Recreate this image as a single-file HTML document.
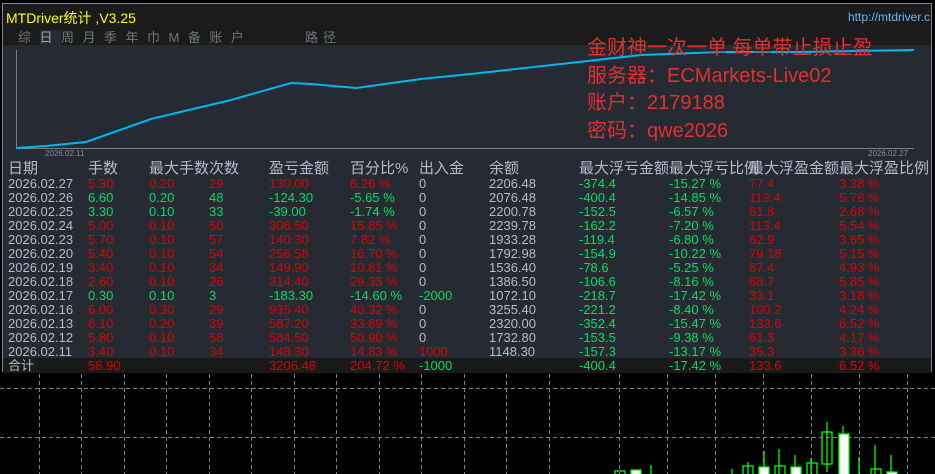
<!DOCTYPE html>
<html><head><meta charset="utf-8"><style>
*{margin:0;padding:0;box-sizing:border-box}
body{width:935px;height:474px;background:#000;overflow:hidden;position:relative;font-family:"Liberation Sans","Noto Sans CJK SC",sans-serif}
.panel{position:absolute;left:2px;top:3px;width:930px;height:369px;background:#252a33;border:1px solid #7a8394}
.top{position:absolute;left:0;top:0;width:100%;height:41px;background:#1b1b1b}
.t{position:absolute;white-space:nowrap}
.row{position:absolute;left:0;width:100%;height:14px;font-size:13px;line-height:14px}
.row span{position:absolute;top:0;white-space:nowrap}
.g{color:#00e060}.r{color:#e00000}.w{color:#b4bccc}
</style></head><body>
<svg width="935" height="474" style="position:absolute;left:0;top:0">
<g stroke="#7a8394" stroke-dasharray="4,3" stroke-width="1">
<line x1="0" y1="388.5" x2="935" y2="388.5"/><line x1="0" y1="437.5" x2="935" y2="437.5"/>
<line x1="39.5" y1="374" x2="39.5" y2="474"/><line x1="81.5" y1="374" x2="81.5" y2="474"/><line x1="124.5" y1="374" x2="124.5" y2="474"/><line x1="166.5" y1="374" x2="166.5" y2="474"/><line x1="209.5" y1="374" x2="209.5" y2="474"/><line x1="251.5" y1="374" x2="251.5" y2="474"/><line x1="294.5" y1="374" x2="294.5" y2="474"/><line x1="336.5" y1="374" x2="336.5" y2="474"/><line x1="379.5" y1="374" x2="379.5" y2="474"/><line x1="421.5" y1="374" x2="421.5" y2="474"/><line x1="464.5" y1="374" x2="464.5" y2="474"/><line x1="506.5" y1="374" x2="506.5" y2="474"/><line x1="549.5" y1="374" x2="549.5" y2="474"/><line x1="619.5" y1="374" x2="619.5" y2="474"/><line x1="667.5" y1="374" x2="667.5" y2="474"/><line x1="715.5" y1="374" x2="715.5" y2="474"/><line x1="763.5" y1="374" x2="763.5" y2="474"/><line x1="811.5" y1="374" x2="811.5" y2="474"/><line x1="859.5" y1="374" x2="859.5" y2="474"/><line x1="907.5" y1="374" x2="907.5" y2="474"/>
</g>
<g stroke="#00ff00" stroke-width="1.3" fill="none">
<rect x="615" y="471" width="10" height="6"/><rect x="631" y="470" width="10" height="6" fill="#fff"/><line x1="651" y1="465" x2="651" y2="474"/>
<line x1="732" y1="469" x2="732" y2="474"/><line x1="748" y1="462" x2="748" y2="474"/><rect x="743" y="466" width="10" height="10"/>
<line x1="764" y1="451" x2="764" y2="474"/><rect x="759" y="467" width="10" height="10" fill="#fff"/>
<line x1="779" y1="449" x2="779" y2="474"/><rect x="775" y="466" width="10" height="10"/>
<line x1="795" y1="455" x2="795" y2="474"/><rect x="791" y="467" width="10" height="10" fill="#fff"/>
<line x1="811" y1="458" x2="811" y2="474"/><rect x="807" y="463" width="10" height="12"/>
<line x1="827" y1="422" x2="827" y2="472"/><rect x="822" y="432" width="10" height="32"/>
<line x1="843" y1="426" x2="843" y2="474"/><rect x="839" y="434" width="10" height="42" fill="#fff"/>
<line x1="859" y1="457" x2="859" y2="474"/>
<line x1="875" y1="445" x2="875" y2="474"/><rect x="871" y="469" width="10" height="8"/>
<line x1="891" y1="455" x2="891" y2="474"/><rect x="887" y="472" width="10" height="6" fill="#fff"/>
</g>
</svg>
<div class="panel">
<div class="top"></div>
<div class="t" style="left:3px;top:4px;font-size:14px;color:#ffff00">MTDriver统计 ,V3.25</div>
<div class="t" style="left:845px;top:6px;font-size:12px;color:#5fb8ff">http://mtdriver.c</div>
<div class="t" style="left:15px;top:23px;font-size:13px;color:#707478;letter-spacing:8.5px">综<span style="background:#262c34;color:#a0a4a8">日</span>周月季年巾M备账户</div>
<div class="t" style="left:302px;top:23px;font-size:13px;color:#707478;letter-spacing:5px">路径</div>
<svg width="930" height="125" style="position:absolute;left:-2px;top:38px">
<line x1="15.5" y1="8" x2="15.5" y2="106" stroke="#7a7e84"/>
<line x1="15" y1="106.5" x2="913" y2="106.5" stroke="#7a7e84"/>
<polyline fill="none" stroke="#00b8f0" stroke-width="2" points="15,106 45,104 85,100 150,77 230,58 290,41 310,42 355,46 420,37 470,32 560,22 640,13 720,10 800,10 913,8"/>
</svg>
<div class="t" style="left:42px;top:145px;font-size:8px;color:#8a8e94">2026.02.11</div>
<div class="t" style="left:865px;top:145px;font-size:8px;color:#8a8e94">2026.02.27</div>
<div class="t" style="left:584px;top:31px;font-size:20px;color:#e03030;line-height:27.5px">金财神一次一单 每单带止损止盈<br>服务器：ECMarkets-Live02<br>账户：2179188<br>密码：qwe2026</div>
<div style="position:absolute;left:0;top:354px;width:100%;height:15px;background:#1a1a1a"></div>
<div class="row w" style="top:157px;font-size:15px;line-height:16px"><span style="left:5px">日期</span><span style="left:85px">手数</span><span style="left:146px">最大手数</span><span style="left:206px">次数</span><span style="left:266px">盈亏金额</span><span style="left:347px">百分比%</span><span style="left:416px">出入金</span><span style="left:486px">余额</span><span style="left:576px">最大浮亏金额</span><span style="left:666px">最大浮亏比例</span><span style="left:746px">最大浮盈金额</span><span style="left:836px">最大浮盈比例</span></div>
<div id="rows"></div>
</div>
<script>
var d=[["2026.02.27","5.30","0.20","29","130.00","6.26 %","0","2206.48","-374.4","-15.27 %","77.4","3.38 %"],
["2026.02.26","6.60","0.20","48","-124.30","-5.65 %","0","2076.48","-400.4","-14.85 %","113.4","5.78 %"],
["2026.02.25","3.30","0.10","33","-39.00","-1.74 %","0","2200.78","-152.5","-6.57 %","61.8","2.68 %"],
["2026.02.24","5.00","0.10","50","306.50","15.85 %","0","2239.78","-162.2","-7.20 %","113.4","5.54 %"],
["2026.02.23","5.70","0.10","57","140.30","7.82 %","0","1933.28","-119.4","-6.80 %","62.9","3.65 %"],
["2026.02.20","5.40","0.10","54","256.58","16.70 %","0","1792.98","-154.9","-10.22 %","79.18","5.15 %"],
["2026.02.19","3.40","0.10","34","149.90","10.81 %","0","1536.40","-78.6","-5.25 %","67.4","4.93 %"],
["2026.02.18","2.60","0.10","26","314.40","29.33 %","0","1386.50","-106.6","-8.16 %","68.7","5.85 %"],
["2026.02.17","0.30","0.10","3","-183.30","-14.60 %","-2000","1072.10","-218.7","-17.42 %","33.1","3.18 %"],
["2026.02.16","6.00","0.30","29","935.40","40.32 %","0","3255.40","-221.2","-8.40 %","100.2","4.24 %"],
["2026.02.13","6.10","0.20","39","587.20","33.89 %","0","2320.00","-352.4","-15.47 %","133.6","6.52 %"],
["2026.02.12","5.80","0.10","58","584.50","50.90 %","0","1732.80","-153.5","-9.38 %","61.3","4.17 %"],
["2026.02.11","3.40","0.10","34","148.30","14.83 %","1000","1148.30","-157.3","-13.17 %","35.3","3.36 %"],
["合计","58.90","","","3206.48","204.72 %","-1000","","-400.4","-17.42 %","133.6","6.52 %"]];
var xs=[5,85,146,206,266,347,416,486,576,666,746,836],h="";
d.forEach(function(r,i){var neg=r[4].charAt(0)=="-";var c=neg?"g":"r";h+='<div class="row" style="top:'+(173+i*14)+'px">';
r.forEach(function(v,j){var cl;if(j==0||j==7)cl="w";else if(j==6)cl=v=="0"?"w":(v.charAt(0)=="-"?"g":"r");else if(j==8||j==9)cl="g";else if(j>=10)cl="r";else cl=c;
h+='<span class="'+cl+'" style="left:'+xs[j]+'px">'+v+'</span>';});h+='</div>';});
document.getElementById("rows").innerHTML=h;
</script>
</body></html>
